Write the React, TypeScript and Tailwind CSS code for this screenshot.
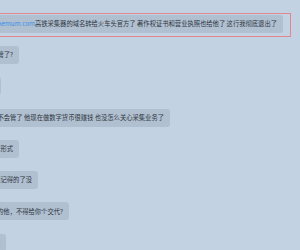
const rows: { right: string; text: React.ReactNode }[] = [
    {
        right: 'w-[283px]',
        text: (
            <>
                <span className="text-[#3b8fe8] underline decoration-[#3b8fe8]/0">www.gaotie.xemum.com</span>{' '}
                高铁采集器的域名转给火车头官方了 著作权证书和营业执照也给他了 这行我彻底退出了
            </>
        ),
    },
    { right: 'w-[19px]', text: '那采集器还有人管了?' },
    { right: 'w-[1px]', text: '嗯' },
    { right: 'w-[170px]', text: '他应该不会管了 他现在做数字货币很赚钱 也没怎么关心采集业务了' },
    { right: 'w-[19px]', text: '还是以前的形式' },
    { right: 'w-[38px]', text: '以前的你还记得的了没' },
    { right: 'w-[69px]', text: '我买的时候找的他，不得给你个交代?' },
    { right: 'w-[6px]', text: '好吧' },
]

export default function App() {
    return (
        <div
            className="relative h-[250px] w-[300px] overflow-hidden bg-[#c3d2e3] text-[6.3px] text-[#2f3640]"
            style={{ fontFamily: '"Noto Sans CJK SC", "Noto Sans", sans-serif' }}
        >
            <div className="flex flex-col gap-[13.3px] pt-[14.7px]">
                {rows.map((r, i) => (
                    <div key={i} className={`flex shrink-0 justify-end overflow-hidden ${r.right}`}>
                        <div className="flex h-[18px] shrink-0 items-center whitespace-nowrap rounded-[3px] bg-[#b1c0d1] pl-[6px] pr-[6px]">
                            {r.text}
                        </div>
                    </div>
                ))}
            </div>
            {/* selection outline round the first message */}
            <div className="absolute left-[-4px] top-[13px] h-[24px] w-[295px] border border-[#e0888c]" />
        </div>
    )
}
